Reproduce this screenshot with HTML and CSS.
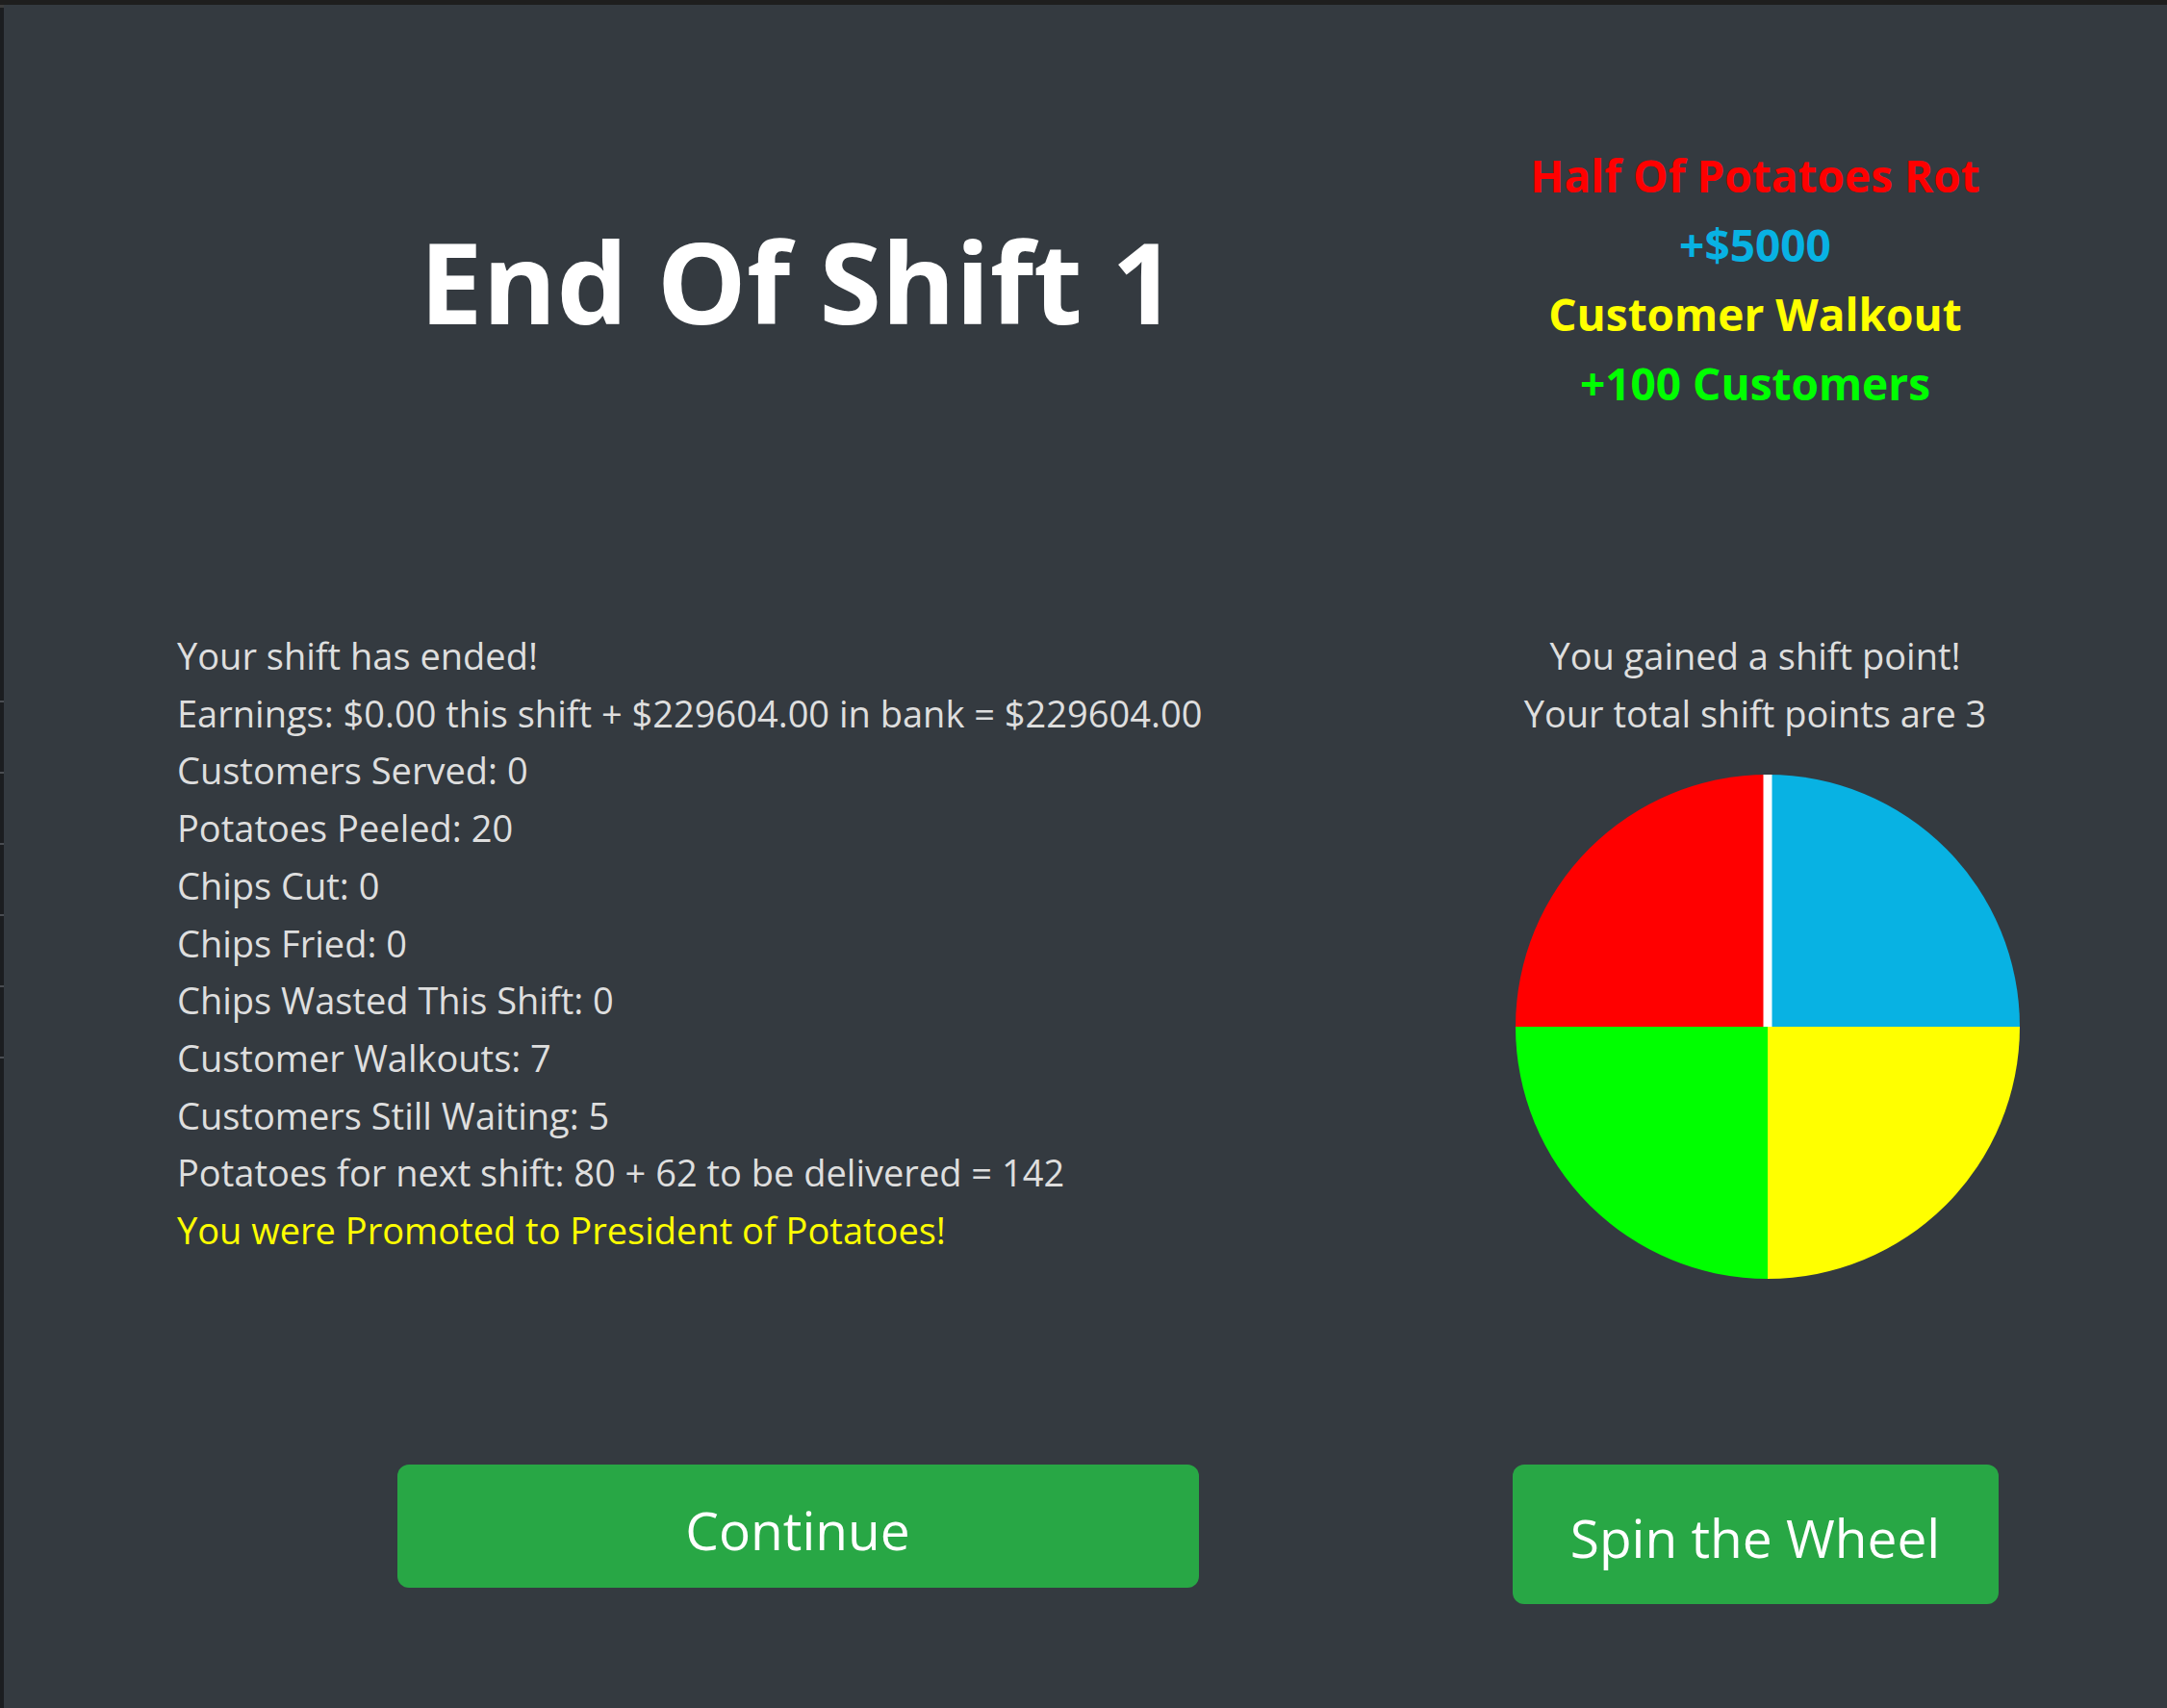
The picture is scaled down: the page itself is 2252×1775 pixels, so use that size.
FILE: index.html
```html
<!DOCTYPE html>
<html lang="en">
<head>
<meta charset="utf-8">
<title>End Of Shift</title>
<link rel="stylesheet" href="styles.css">
</head>
<body>
<div class="topbar"></div>
<div class="app">
  <div class="strip">
    <span class="tick"></span><span class="tick"></span><span class="tick"></span><span class="tick"></span><span class="tick"></span><span class="tick"></span>
  </div>
  <main class="panel">
    <section class="row header">
      <div class="col-left head-left">
        <h1 class="title">End Of Shift 1</h1>
      </div>
      <div class="col-right events">
        <div class="ev ev-red">Half Of Potatoes Rot</div>
        <div class="ev ev-blue">+$5000</div>
        <div class="ev ev-yellow">Customer Walkout</div>
        <div class="ev ev-green">+100 Customers</div>
      </div>
    </section>

    <section class="row middle">
      <div class="col-left stats">
        <div class="line">Your shift has ended!</div>
        <div class="line">Earnings: $0.00 this shift + $229604.00 in bank = $229604.00</div>
        <div class="line">Customers Served: 0</div>
        <div class="line">Potatoes Peeled: 20</div>
        <div class="line">Chips Cut: 0</div>
        <div class="line">Chips Fried: 0</div>
        <div class="line">Chips Wasted This Shift: 0</div>
        <div class="line">Customer Walkouts: 7</div>
        <div class="line">Customers Still Waiting: 5</div>
        <div class="line">Potatoes for next shift: 80 + 62 to be delivered = 142</div>
        <div class="line promo">You were Promoted to President of Potatoes!</div>
      </div>
      <div class="col-right points">
        <div class="line">You gained a shift point!</div>
        <div class="line">Your total shift points are 3</div>
        <svg class="wheel" width="550" height="524" viewBox="0 0 550 524">
          <path d="M288 262 L26 262 A262 262 0 0 1 288 0 Z" fill="#ff0000"/>
          <path d="M288 262 L288 0 A262 262 0 0 1 550 262 Z" fill="#08b2e3"/>
          <path d="M288 262 L550 262 A262 262 0 0 1 288 524 Z" fill="#ffff00"/>
          <path d="M288 262 L288 524 A262 262 0 0 1 26 262 Z" fill="#00ff00"/>
          <rect x="283.5" y="0" width="9" height="262" fill="#ffffff"/>
        </svg>
      </div>
    </section>

    <section class="row actions">
      <div class="col-left act-left">
        <button class="btn btn-continue">Continue</button>
      </div>
      <div class="col-right">
        <button class="btn btn-spin">Spin the Wheel</button>
      </div>
    </section>
  </main>
</div>
</body>
</html>
```
FILE: styles.css
```css
html, body {
  margin: 0;
  padding: 0;
}
body {
  background: #1b1d20;
  font-family: "Open Sans", "Noto Sans", sans-serif;
  overflow: hidden;
}
.topbar {
  height: 5px;
  background: #1e1e1e;
}
.app {
  display: flex;
  min-height: 1770px;
}
.strip {
  width: 4px;
  flex: none;
  background: #1b1d20;
  border-top: 3px solid #3c3c3c;
  display: flex;
  flex-direction: column;
  gap: 72px;
  padding-top: 720px;
  box-sizing: border-box;
}
.tick {
  display: block;
  height: 2px;
  background: #4a4d52;
}
.panel {
  flex: 1;
  min-width: 0;
  background: #343a40;
  color: #dedede;
}
.row {
  display: grid;
  grid-template-columns: 1650px minmax(0, 1fr);
}
.col-right {
  min-width: 0;
  display: flex;
  flex-direction: column;
  align-items: center;
  padding-right: 258px;
}
.header {
  padding-top: 141px;
  align-items: center;
}
.head-left {
  display: flex;
  justify-content: center;
}
.title {
  margin: 4px 0 0;
  font-size: 117px;
  line-height: 1.2;
  font-weight: 700;
  color: #ffffff;
  white-space: nowrap;
}
.ev {
  font-size: 46px;
  line-height: 72px;
  font-weight: 700;
  white-space: nowrap;
}
.ev-red { color: #ff0000; }
.ev-blue { color: #08b2e3; }
.ev-yellow { color: #ffff00; }
.ev-green { color: #00ff00; }

.middle {
  margin-top: 218px;
  align-items: start;
}
.line {
  font-size: 38px;
  line-height: 59.7px;
  white-space: nowrap;
}
.stats {
  padding-left: 180px;
}
.promo {
  color: #ffff00;
}
.wheel {
  display: block;
  flex: none;
  margin-top: 34px;
}
.actions {
  margin-top: 193px;
  align-items: start;
}
.act-left {
  display: flex;
  justify-content: center;
}
.btn {
  display: flex;
  align-items: center;
  justify-content: center;
  box-sizing: border-box;
  border: none;
  border-radius: 12px;
  background: #28a745;
  color: #ffffff;
  font-family: "Open Sans", "Noto Sans", sans-serif;
  font-size: 55px;
  font-weight: 400;
  padding: 6px 0 0;
  flex: none;
}
.btn-continue {
  width: 833px;
  height: 128px;
}
.btn-spin {
  width: 505px;
  height: 145px;
}
```
